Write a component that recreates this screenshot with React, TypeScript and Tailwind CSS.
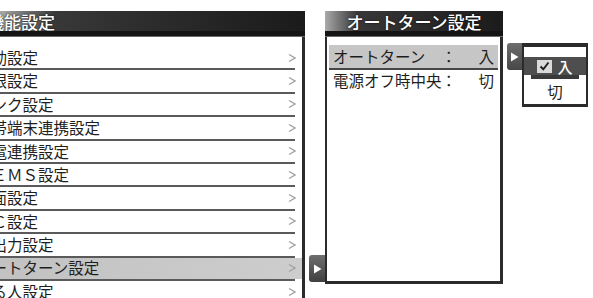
import React from "react";

const leftRows = [
  "起動設定",
  "制限設定",
  "リンク設定",
  "携帯端末連携設定",
  "家電連携設定",
  "ＨＥＭＳ設定",
  "画面設定",
  "ＰＣ設定",
  "音出力設定",
  "オートターン設定",
  "見る人設定",
];

function Chevron() {
  return (
    <svg width="8" height="10" viewBox="0 0 8 10" className="shrink-0">
      <path d="M1 1.5 L7 5 L1 8.5" fill="none" stroke="#a0a0a0" strokeWidth="1.3" />
    </svg>
  );
}

function Tri() {
  return (
    <svg width="9" height="10" viewBox="0 0 9 10">
      <path d="M1 0.5 L8.5 5 L1 9.5Z" fill="#ffffff" />
    </svg>
  );
}

function Header({ title, center, offset }: { title: string; center?: boolean; offset?: string }) {
  return (
    <div className="h-[26px] flex flex-col shrink-0">
      <div
        className={`h-[20px] flex items-center bg-linear-to-r from-[#aaaaaa] via-[#383838] via-18% to-[#1b1b1b] overflow-hidden ${
          center ? "justify-center" : ""
        }`}
      >
        <span
          className={`whitespace-nowrap text-white text-[17px] leading-none font-medium [text-shadow:0_0_2px_#000] ${offset ?? ""}`}
        >
          {title}
        </span>
      </div>
      <div className="h-[5px] bg-[#141414]" />
      <div className="h-[1px] bg-[#6a6a6a]" />
    </div>
  );
}

export default function App() {
  return (
    <div className="w-[593px] h-[298px] overflow-hidden bg-white flex items-start font-['Noto_Sans_CJK_JP','Noto_Sans',sans-serif]">
      {/* Left panel */}
      <div className="w-[305px] h-[298px] shrink-0 flex flex-col pt-[11px]">
        <Header title="機能設定" offset="ml-[-13px]" />
        <div className="flex-1 border-r-[3px] border-[#2b2b2b] pt-[10px] overflow-hidden">
          {leftRows.map((t, i) => {
            const active = t === "オートターン設定";
            return (
              <div key={i} className="h-[23.4px] flex flex-col">
                <div
                  className={`flex-1 flex items-center overflow-hidden pr-[6px] ${
                    active ? "bg-linear-to-r from-[#c2c2c2] to-[#cdcdcd]" : ""
                  }`}
                >
                  <span className="flex-1 min-w-0 ml-[-24px] whitespace-nowrap text-[15.5px] leading-none text-[#1e1e1e]">
                    {t}
                  </span>
                  <Chevron />
                </div>
                <div className="h-[2px] w-[295px] bg-[#5a5a5a] shrink-0" />
              </div>
            );
          })}
        </div>
      </div>

      {/* tab to panel 2 */}
      <div className="w-[20px] shrink-0 flex justify-end">
        <div className="mt-[255px] w-[16px] h-[27px] rounded-l-[3px] bg-linear-to-b from-[#6e6e6e] to-[#404040] flex items-center justify-center">
          <Tri />
        </div>
      </div>

      {/* Panel 2 */}
      <div className="w-[178px] shrink-0 flex flex-col pt-[11px]">
        <Header title="オートターン設定" center />
        <div className="h-[247px] border-l-2 border-r-[3px] border-b-[3px] border-[#2b2b2b] pt-[8px] px-[2px]">
          <div className="h-[25px] bg-[#c6c6c6] border-b-2 border-[#474747] flex items-center pl-[4px] pr-[4px] text-[15.5px] leading-none text-[#1e1e1e]">
            <span className="w-[108px] whitespace-nowrap">オートターン</span>
            <span>：</span>
            <span className="flex-1 text-right">入</span>
          </div>
          <div className="h-[22px] flex items-center pl-[4px] pr-[4px] text-[15.5px] leading-none text-[#1e1e1e]">
            <span className="w-[108px] whitespace-nowrap">電源オフ時中央</span>
            <span>：</span>
            <span className="flex-1 text-right">切</span>
          </div>
        </div>
      </div>

      {/* tab to popup */}
      <div className="w-[19px] shrink-0 flex justify-end">
        <div className="mt-[43px] w-[15px] h-[27px] rounded-l-[3px] bg-linear-to-b from-[#6e6e6e] to-[#474747] flex items-start justify-center pt-[9px]">
          <Tri />
        </div>
      </div>

      {/* Popup */}
      <div className="mt-[43px] w-[66px] h-[64px] shrink-0 border-x-2 border-t-4 border-b-[3px] border-[#2b2b2b] bg-white flex flex-col">
        <div className="h-[10px]" />
        <div className="h-[18px] bg-[#4e4e4e] flex items-center justify-center gap-[5px]">
          <div className="w-[15px] h-[13px] bg-[#dadada] flex items-center justify-center">
            <svg width="11" height="10" viewBox="0 0 11 10">
              <path d="M1.5 5.5 L4.3 8.3 L9.5 1.5" fill="none" stroke="#222" strokeWidth="2" />
            </svg>
          </div>
          <span className="text-white text-[15px] leading-none font-medium">入</span>
        </div>
        <div className="h-[4px] mx-[7px] bg-[#3a3a3a]" />
        <div className="flex-1 flex items-center justify-center text-[15.5px] leading-none text-[#1e1e1e]">
          切
        </div>
      </div>
    </div>
  );
}
